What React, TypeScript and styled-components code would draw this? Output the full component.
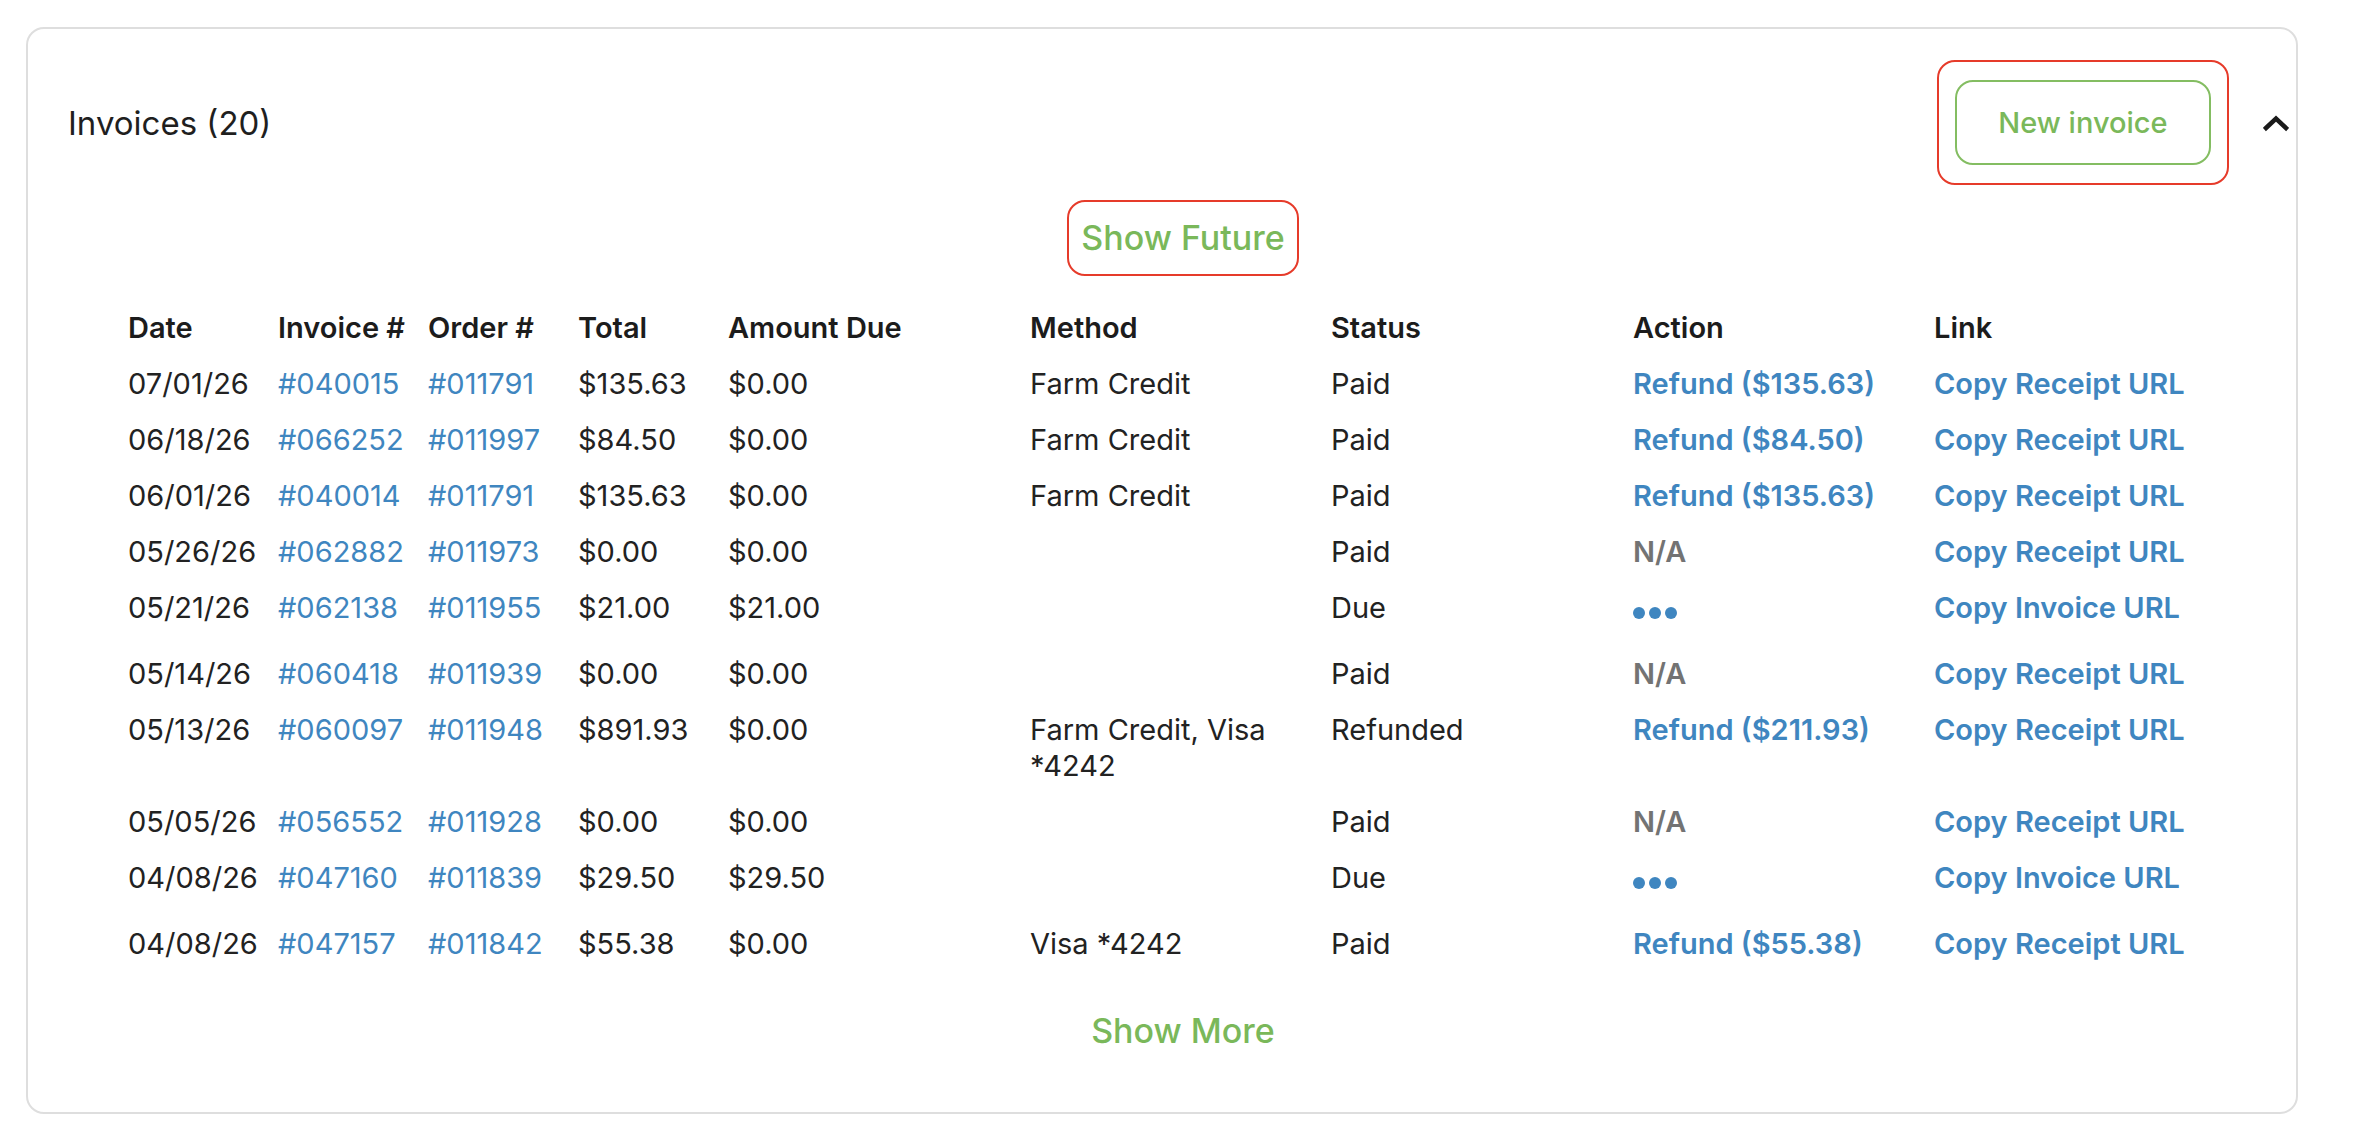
import styled, { createGlobalStyle } from "styled-components";

const GlobalStyle = createGlobalStyle`
  html, body {
    margin: 0;
    background: #ffffff;
  }
  body {
    padding: 27px 60px 21px 26px;
    font-family: "Inter", "Noto Sans", sans-serif;
    color: #222222;
  }
  * {
    box-sizing: border-box;
  }
`;

const Card = styled.section`
  border: 2px solid #dedede;
  border-radius: 18px;
  padding: 31px 0 63px 40px;
  display: flex;
  flex-direction: column;
`;

const Header = styled.header`
  display: flex;
  align-items: center;
  justify-content: space-between;
`;

const Title = styled.h2`
  margin: 0;
  font-size: 33px;
  font-weight: 400;
  color: #1f1f1f;
`;

const HeaderActions = styled.div`
  display: flex;
  align-items: center;
  gap: 27px;
`;

const Highlight = styled.div<{ $pad: string }>`
  border: 2px solid #e63b2a;
  border-radius: 18px;
  padding: ${(p) => p.$pad};
  display: flex;
  align-items: center;
  justify-content: center;
`;

const OutlineButton = styled.button`
  width: 256px;
  height: 85px;
  border: 2px solid #84bd62;
  border-radius: 18px;
  background: #ffffff;
  color: #7ab85a;
  font-family: inherit;
  font-size: 29px;
  font-weight: 500;
  cursor: pointer;
`;

const ChevronButton = styled.button`
  width: 40px;
  height: 40px;
  border: none;
  background: none;
  padding: 0;
  display: flex;
  align-items: center;
  justify-content: center;
  cursor: pointer;
`;

const Centered = styled.div<{ $top: number }>`
  display: flex;
  justify-content: center;
  margin-top: ${(p) => p.$top}px;
  padding-left: 2px;
`;

const TextButton = styled.button`
  border: none;
  background: none;
  padding: 0 12px;
  height: 36px;
  color: #7ab85a;
  font-family: inherit;
  font-size: 34px;
  font-weight: 500;
  line-height: 36px;
  cursor: pointer;
`;

const Table = styled.table`
  width: 2100px;
  margin: 24px 0 0 60px;
  border-collapse: collapse;
  table-layout: fixed;
  font-size: 29px;
  line-height: 36px;
`;

const Th = styled.th`
  text-align: left;
  font-weight: 600;
  color: #1c1c1c;
  padding: 10px 0;
  vertical-align: top;
`;

const Td = styled.td<{ $wrap?: boolean }>`
  padding: ${(p) => (p.$wrap ? "10px 40px 10px 0" : "10px 0")};
  vertical-align: top;
  white-space: ${(p) => (p.$wrap ? "normal" : "nowrap")};
  color: #222222;
`;

const Link = styled.a<{ $strong?: boolean }>`
  color: #3f86c0;
  font-weight: ${(p) => (p.$strong ? 600 : 400)};
  text-decoration: none;
  cursor: pointer;
`;

const Muted = styled.span`
  color: #737373;
  font-weight: 600;
`;

const DotsButton = styled.button`
  height: 46px;
  border: none;
  background: none;
  padding: 0;
  display: inline-flex;
  align-items: center;
  gap: 4px;
  vertical-align: top;
  cursor: pointer;
`;

const Dot = styled.span`
  width: 12px;
  height: 12px;
  border-radius: 50%;
  background: #3f86c0;
`;

type Invoice = {
  date: string;
  invoice: string;
  order: string;
  total: string;
  due: string;
  method: string;
  status: string;
  action: "refund" | "na" | "menu";
  refund?: string;
  link: string;
};

const invoices: Invoice[] = [
  { date: "07/01/26", invoice: "#040015", order: "#011791", total: "$135.63", due: "$0.00", method: "Farm Credit", status: "Paid", action: "refund", refund: "$135.63", link: "Copy Receipt URL" },
  { date: "06/18/26", invoice: "#066252", order: "#011997", total: "$84.50", due: "$0.00", method: "Farm Credit", status: "Paid", action: "refund", refund: "$84.50", link: "Copy Receipt URL" },
  { date: "06/01/26", invoice: "#040014", order: "#011791", total: "$135.63", due: "$0.00", method: "Farm Credit", status: "Paid", action: "refund", refund: "$135.63", link: "Copy Receipt URL" },
  { date: "05/26/26", invoice: "#062882", order: "#011973", total: "$0.00", due: "$0.00", method: "", status: "Paid", action: "na", link: "Copy Receipt URL" },
  { date: "05/21/26", invoice: "#062138", order: "#011955", total: "$21.00", due: "$21.00", method: "", status: "Due", action: "menu", link: "Copy Invoice URL" },
  { date: "05/14/26", invoice: "#060418", order: "#011939", total: "$0.00", due: "$0.00", method: "", status: "Paid", action: "na", link: "Copy Receipt URL" },
  { date: "05/13/26", invoice: "#060097", order: "#011948", total: "$891.93", due: "$0.00", method: "Farm Credit, Visa *4242", status: "Refunded", action: "refund", refund: "$211.93", link: "Copy Receipt URL" },
  { date: "05/05/26", invoice: "#056552", order: "#011928", total: "$0.00", due: "$0.00", method: "", status: "Paid", action: "na", link: "Copy Receipt URL" },
  { date: "04/08/26", invoice: "#047160", order: "#011839", total: "$29.50", due: "$29.50", method: "", status: "Due", action: "menu", link: "Copy Invoice URL" },
  { date: "04/08/26", invoice: "#047157", order: "#011842", total: "$55.38", due: "$0.00", method: "Visa *4242", status: "Paid", action: "refund", refund: "$55.38", link: "Copy Receipt URL" },
];

const columns = [
  { label: "Date", width: 150 },
  { label: "Invoice #", width: 150 },
  { label: "Order #", width: 150 },
  { label: "Total", width: 150 },
  { label: "Amount Due", width: 302 },
  { label: "Method", width: 301 },
  { label: "Status", width: 302 },
  { label: "Action", width: 301 },
  { label: "Link", width: 294 },
];

const renderAction = (row: Invoice) => {
  if (row.action === "refund") return <Link $strong>Refund ({row.refund})</Link>;
  if (row.action === "na") return <Muted>N/A</Muted>;
  return (
    <DotsButton aria-label="More actions">
      <Dot />
      <Dot />
      <Dot />
    </DotsButton>
  );
};

const App = () => {
  return (
    <>
      <GlobalStyle />
      <Card>
        <Header>
          <Title>Invoices (20)</Title>
          <HeaderActions>
            <Highlight $pad="18px 16px">
              <OutlineButton>New invoice</OutlineButton>
            </Highlight>
            <ChevronButton aria-label="Collapse">
              <svg width="26" height="18" viewBox="0 0 26 18" fill="none">
                <polyline
                  points="3,14 13,4.5 23,14"
                  stroke="#1a1a1a"
                  strokeWidth="4.5"
                  strokeLinecap="square"
                  strokeLinejoin="miter"
                />
              </svg>
            </ChevronButton>
          </HeaderActions>
        </Header>

        <Centered $top={15}>
          <Highlight $pad="18px 0">
            <TextButton>Show Future</TextButton>
          </Highlight>
        </Centered>

        <Table>
          <colgroup>
            {columns.map((c) => (
              <col key={c.label} style={{ width: c.width }} />
            ))}
          </colgroup>
          <thead>
            <tr>
              {columns.map((c) => (
                <Th key={c.label}>{c.label}</Th>
              ))}
            </tr>
          </thead>
          <tbody>
            {invoices.map((row) => (
              <tr key={row.invoice}>
                <Td>{row.date}</Td>
                <Td>
                  <Link>{row.invoice}</Link>
                </Td>
                <Td>
                  <Link>{row.order}</Link>
                </Td>
                <Td>{row.total}</Td>
                <Td>{row.due}</Td>
                <Td $wrap>{row.method}</Td>
                <Td>{row.status}</Td>
                <Td>{renderAction(row)}</Td>
                <Td>
                  <Link $strong>{row.link}</Link>
                </Td>
              </tr>
            ))}
          </tbody>
        </Table>

        <Centered $top={41}>
          <TextButton>Show More</TextButton>
        </Centered>
      </Card>
    </>
  );
};

export default App;
